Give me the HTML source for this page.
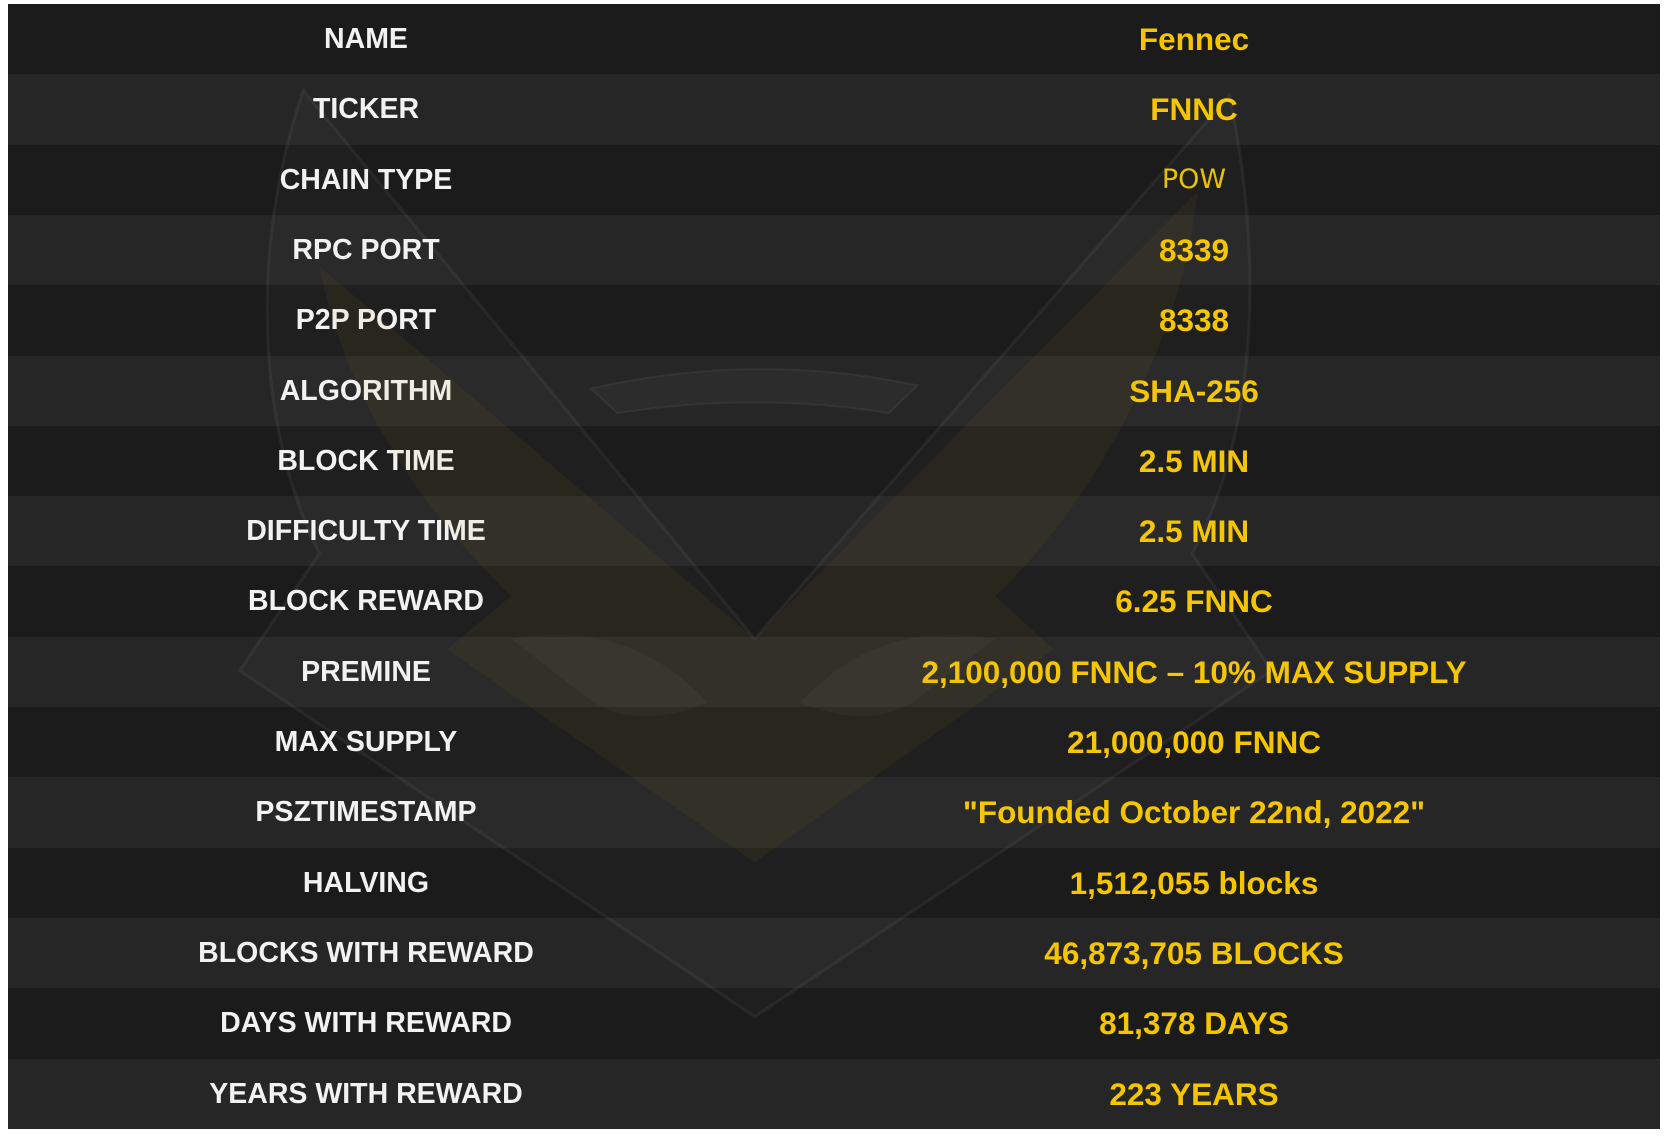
<!DOCTYPE html>
<html><head><meta charset="utf-8"><style>
html,body{margin:0;padding:0;background:#fff;width:1669px;height:1137px;overflow:hidden}
#t{position:absolute;left:8px;top:4px;width:1652px;height:1125px;background:#1b1b1b}
.r{position:absolute;left:0;width:1652px;height:71px;}
.d{background:#1b1b1b}.l{background:#262626}
.k,.v{position:absolute;top:0;height:70px;line-height:70px;text-align:center;font-family:"Liberation Sans",Arial,sans-serif;font-weight:bold;white-space:nowrap}
.k{left:0;width:716px;color:#f2f2f2;font-size:28.5px}
.v{left:765px;width:842px;color:#f5c500;font-size:31.5px}
.pw{font-weight:normal;font-family:"DejaVu Sans","Liberation Sans",sans-serif;font-size:27px;color:#e8c000}
svg{position:absolute;left:0;top:0}
</style></head><body>
<div id="t">
<div class="r d" style="top:0"><div class="k">NAME</div><div class="v">Fennec</div></div>
<div class="r l" style="top:70px"><div class="k">TICKER</div><div class="v">FNNC</div></div>
<div class="r d" style="top:141px"><div class="k">CHAIN TYPE</div><div class="v pw">POW</div></div>
<div class="r l" style="top:211px"><div class="k">RPC PORT</div><div class="v">8339</div></div>
<div class="r d" style="top:281px"><div class="k">P2P PORT</div><div class="v">8338</div></div>
<div class="r l" style="top:352px"><div class="k">ALGORITHM</div><div class="v">SHA-256</div></div>
<div class="r d" style="top:422px"><div class="k">BLOCK TIME</div><div class="v">2.5 MIN</div></div>
<div class="r l" style="top:492px"><div class="k">DIFFICULTY TIME</div><div class="v">2.5 MIN</div></div>
<div class="r d" style="top:562px"><div class="k">BLOCK REWARD</div><div class="v">6.25 FNNC</div></div>
<div class="r l" style="top:633px"><div class="k">PREMINE</div><div class="v">2,100,000 FNNC – 10% MAX SUPPLY</div></div>
<div class="r d" style="top:703px"><div class="k">MAX SUPPLY</div><div class="v">21,000,000 FNNC</div></div>
<div class="r l" style="top:773px"><div class="k">PSZTIMESTAMP</div><div class="v">"Founded October 22nd, 2022"</div></div>
<div class="r d" style="top:844px"><div class="k">HALVING</div><div class="v">1,512,055 blocks</div></div>
<div class="r l" style="top:914px"><div class="k">BLOCKS WITH REWARD</div><div class="v">46,873,705 BLOCKS</div></div>
<div class="r d" style="top:984px"><div class="k">DAYS WITH REWARD</div><div class="v">81,378 DAYS</div></div>
<div class="r l" style="top:1055px;height:70px"><div class="k">YEARS WITH REWARD</div><div class="v">223 YEARS</div></div>
</div>
<svg width="1669" height="1137" viewBox="0 0 1568 1068" preserveAspectRatio="none">
<path d="M285,85 C235,230 240,400 300,520 L225,630 L709,955 L1195,630 L1120,520 C1185,400 1185,230 1155,90 L709,600 Z" fill="rgba(255,255,255,0.02)" stroke="rgba(255,255,255,0.05)" stroke-width="3"/>
<path d="M300,250 C330,400 420,500 480,560 L420,610 L709,810 L990,610 L935,560 C1020,480 1110,330 1125,180 L709,600 Z" fill="rgba(190,160,0,0.06)"/>
<path d="M555,365 Q710,330 862,362 L835,388 Q710,368 580,388 Z" fill="rgba(255,255,255,0.03)" stroke="rgba(255,255,255,0.05)" stroke-width="2"/>
<path d="M480,600 Q590,580 665,660 Q590,690 545,650 Z" fill="rgba(255,255,255,0.03)"/>
<path d="M935,600 Q825,580 752,660 Q825,690 870,650 Z" fill="rgba(255,255,255,0.03)"/>
</svg>
</body></html>
